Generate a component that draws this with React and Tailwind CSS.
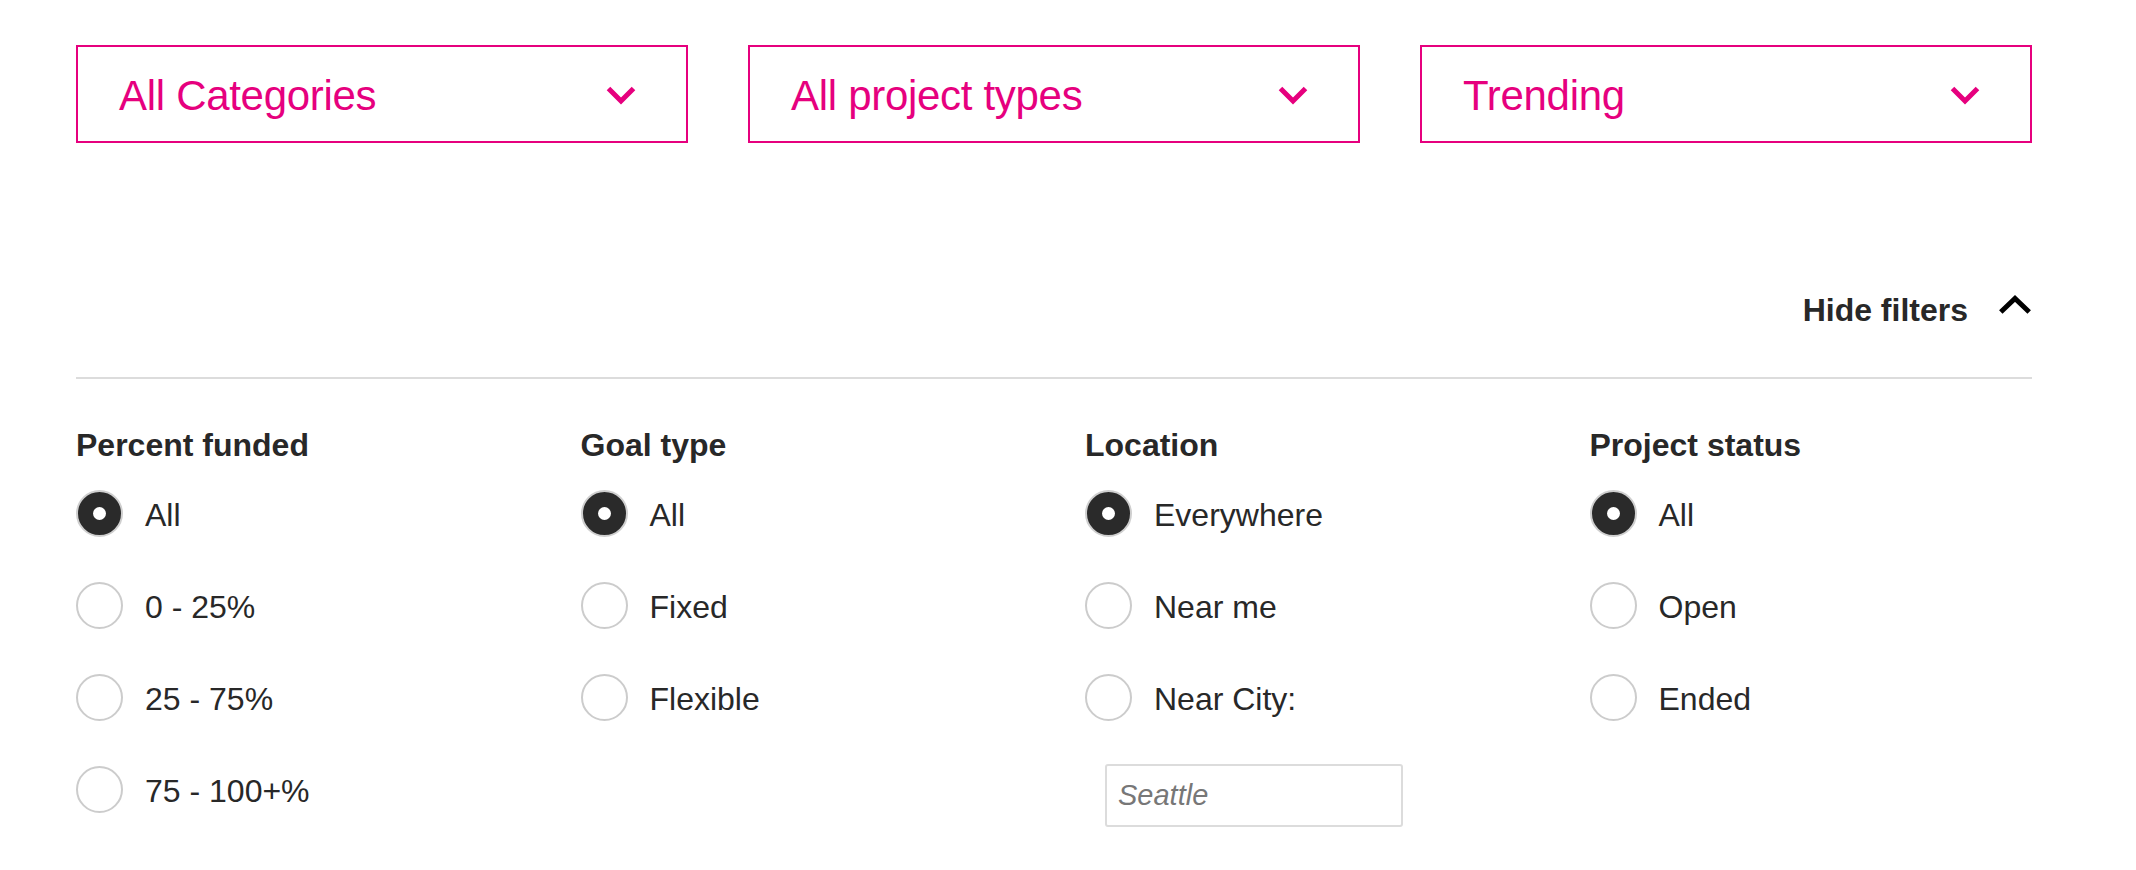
import React, { useState } from 'react';

const groups = [
    { title: 'Percent funded', options: ['All', '0 - 25%', '25 - 75%', '75 - 100+%'] },
    { title: 'Goal type', options: ['All', 'Fixed', 'Flexible'] },
    { title: 'Location', options: ['Everywhere', 'Near me', 'Near City:'], city: true },
    { title: 'Project status', options: ['All', 'Open', 'Ended'] },
];

function ChevronDown() {
    return (
        <svg width="30" height="19" viewBox="0 0 30 19" className="shrink-0">
            <polyline points="2.5,2.5 15,15 27.5,2.5" fill="none" stroke="#e6007e" strokeWidth="5" />
        </svg>
    );
}

function ChevronUp() {
    return (
        <svg width="34" height="20" viewBox="0 0 34 20" className="shrink-0">
            <polyline points="2.8,17 17,3.5 31.2,17" fill="none" stroke="#000" strokeWidth="5" />
        </svg>
    );
}

function Dropdown({ label }) {
    return (
        <button className="flex h-[98px] w-[612px] items-center justify-between border-2 border-[#e6007e] pl-[41px] pr-[50px] pt-[2px] text-[42px] tracking-[-0.3px] text-[#e6007e]">
            <span>{label}</span>
            <ChevronDown />
        </button>
    );
}

function Radio({ checked }) {
    if (checked) {
        return (
            <span className="flex h-[47px] w-[47px] shrink-0 items-center justify-center rounded-full border-2 border-[#cfcfcf] bg-[#2a2a2a]">
                <span className="h-[13px] w-[13px] rounded-full bg-white" />
            </span>
        );
    }
    return <span className="h-[47px] w-[47px] shrink-0 rounded-full border-2 border-[#cccccc] bg-white" />;
}

function FilterGroup({ group, value, onChange }) {
    return (
        <div>
            <h3 className="text-[32px] leading-[38px] font-bold text-[#282828]">{group.title}</h3>
            <div className="mt-[26px] flex flex-col gap-[45px]">
                {group.options.map(opt => (
                    <label key={opt} className="flex h-[47px] cursor-pointer items-center gap-[22px]" onClick={() => onChange(opt)}>
                        <Radio checked={value === opt} />
                        <span className="pt-[3px] text-[32px] leading-[38px] text-[#282828]">{opt}</span>
                    </label>
                ))}
            </div>
            {group.city && (
                <input
                    placeholder="Seattle"
                    className="mt-[43px] ml-[20px] h-[63px] w-[298px] rounded-[3px] border-2 border-[#dcdcdc] px-[11px] text-[29px] italic text-[#282828] outline-none placeholder:text-[#777]"
                />
            )}
        </div>
    );
}

export default function App() {
    const [selected, setSelected] = useState(groups.map(g => g.options[0]));

    return (
        <div className="min-h-screen bg-white pl-[76px] pt-[45px]" style={{ fontFamily: '"Liberation Sans", Arial, sans-serif' }}>
            <div className="flex w-[1956px] gap-[60px]">
                <Dropdown label="All Categories" />
                <Dropdown label="All project types" />
                <Dropdown label="Trending" />
            </div>

            <div className="mt-[148px] flex w-[1956px] items-center justify-end gap-[30px]">
                <span className="text-[32px] leading-[38px] font-bold text-[#282828]">Hide filters</span>
                <span className="-mt-[10px]"><ChevronUp /></span>
            </div>

            <div className="mt-[48px] h-[2px] w-[1956px] bg-[#dcdcdc]" />

            <div className="mt-[47px] grid w-[2018px] grid-cols-4">
                {groups.map((g, i) => (
                    <FilterGroup
                        key={g.title}
                        group={g}
                        value={selected[i]}
                        onChange={v => setSelected(s => s.map((x, j) => (j === i ? v : x)))}
                    />
                ))}
            </div>
        </div>
    );
}
